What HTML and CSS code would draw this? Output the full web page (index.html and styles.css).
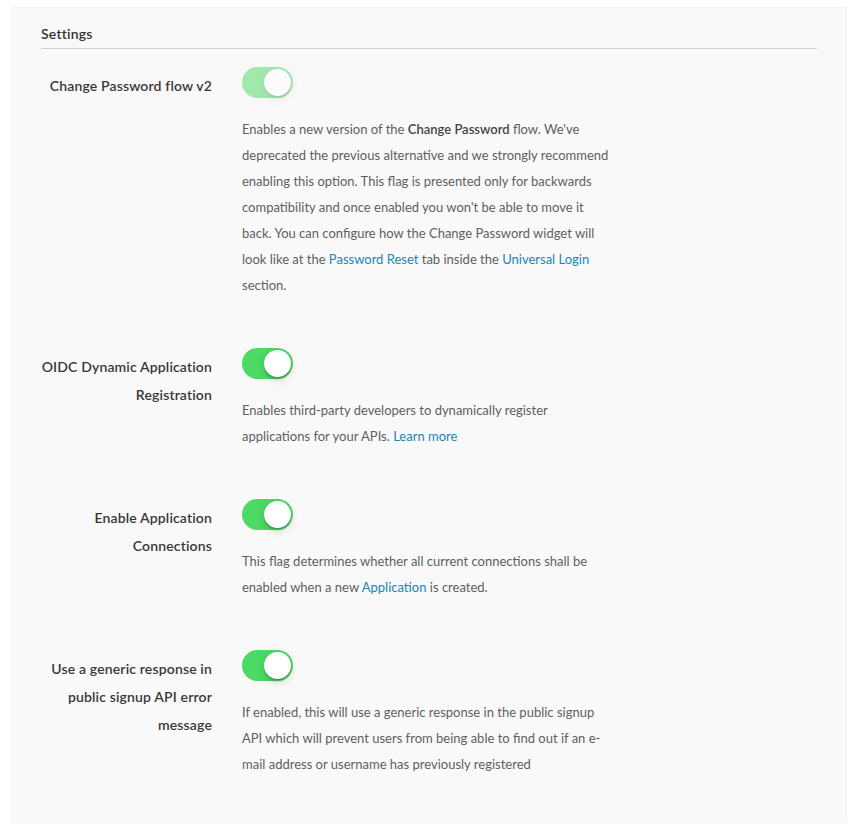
FILE: index.html
```html
<!DOCTYPE html>
<html lang="en">
<head>
<meta charset="utf-8">
<title>Settings</title>
<link rel="stylesheet" href="styles.css">
</head>
<body>
<section class="panel">
  <h2 class="title">Settings</h2>
  <div class="rows">
    <div class="row">
      <div class="label">Change Password flow v2</div>
      <div class="control">
        <span class="switch on disabled"><span class="knob"></span></span>
        <p class="desc">Enables a new version of the <strong>Change Password</strong> flow. We've deprecated the previous alternative and we strongly recommend enabling this option. This flag is presented only for backwards compatibility and once enabled you won't be able to move it back. You can configure how the Change Password widget will look like at the <a href="#">Password Reset</a> tab inside the <a href="#">Universal Login</a> section.</p>
      </div>
    </div>
    <div class="row">
      <div class="label">OIDC Dynamic Application Registration</div>
      <div class="control">
        <span class="switch on"><span class="knob"></span></span>
        <p class="desc">Enables third-party developers to dynamically register applications for your APIs. <a href="#">Learn more</a></p>
      </div>
    </div>
    <div class="row">
      <div class="label">Enable Application Connections</div>
      <div class="control">
        <span class="switch on"><span class="knob"></span></span>
        <p class="desc">This flag determines whether all current connections shall be enabled when a new <a href="#">Application</a> is created.</p>
      </div>
    </div>
    <div class="row">
      <div class="label">Use a generic response in public signup API error message</div>
      <div class="control">
        <span class="switch on"><span class="knob"></span></span>
        <p class="desc">If enabled, this will use a generic response in the public signup API which will prevent users from being able to find out if an e-mail address or username has previously registered</p>
      </div>
    </div>
  </div>
</section>
</body>
</html>
```

FILE: styles.css
```css
* { box-sizing: border-box; }

body {
  margin: 0;
  background: #fff;
  font-family: Lato, "Noto Sans", Arial, sans-serif;
  color: #333;
}

.panel {
  margin: 7px 12px 11px 11px;
  background: #f9f9f9;
  border: 1px solid #f3f3f3;
  padding: 0 29px 45px 29px;
}

.title {
  margin: 16px 0 0 0;
  font-size: 14px;
  font-weight: 600;
  line-height: 20px;
  padding-bottom: 4px;
  border-bottom: 1px solid #d0d0d0;
  color: #333;
  letter-spacing: 0.2px;
}

.rows {
  display: flex;
  flex-direction: column;
  gap: 50px;
  padding-top: 18px;
}

.row {
  display: grid;
  grid-template-columns: 171px 1fr;
  column-gap: 30px;
  align-items: start;
}

.label {
  text-align: right;
  font-size: 14px;
  font-weight: 600;
  line-height: 28px;
  padding-top: 5px;
  color: #383838;
  letter-spacing: 0.15px;
}

.control {
  display: flex;
  flex-direction: column;
  align-items: flex-start;
  gap: 18px;
}

.switch {
  position: relative;
  display: block;
  width: 51px;
  height: 31px;
  border-radius: 16px;
  background: #e5e5e5;
}

.switch.on { background: #4cd964; }
.switch.disabled { opacity: 0.5; }

.knob {
  position: absolute;
  top: 2px;
  left: 2px;
  width: 27px;
  height: 27px;
  border-radius: 50%;
  background: #fff;
  box-shadow: 0 3px 8px rgba(0,0,0,0.15), 0 1px 1px rgba(0,0,0,0.16), 0 3px 1px rgba(0,0,0,0.08);
}

.switch.on .knob { left: 22px; }

.desc {
  margin: 0;
  max-width: 372px;
  font-size: 13px;
  line-height: 26px;
  color: #5f5f5f;
}

.desc strong { font-weight: 600; color: #444; }

.desc a {
  color: #1a86b6;
  text-decoration: none;
}
```
